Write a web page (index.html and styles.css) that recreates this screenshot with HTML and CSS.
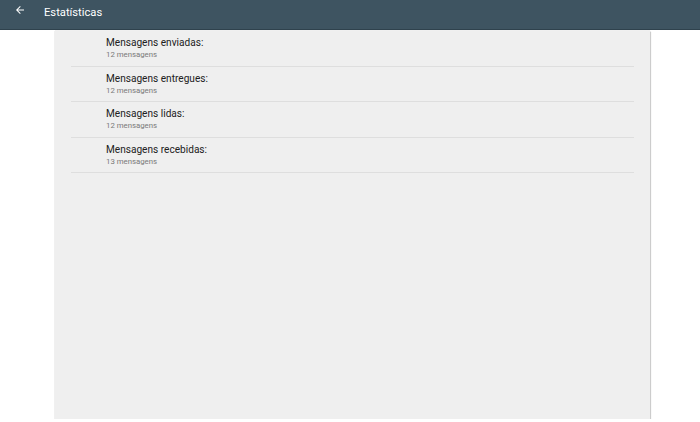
FILE: index.html
```html
<!DOCTYPE html>
<html>
<head>
<meta charset="utf-8">
<link rel="stylesheet" href="styles.css">
</head>
<body>
<header class="appbar">
  <svg class="back" width="12" height="12" viewBox="0 0 24 24"><path d="M20 11H7.83l5.59-5.59L12 4l-8 8 8 8 1.41-1.41L7.83 13H20v-2z" fill="#fff"/></svg>
  <span class="title">Estatísticas</span>
</header>
<main class="wrap">
  <section class="card">
    <div class="row"><div class="name">Mensagens enviadas:</div><div class="val">12 mensagens</div></div>
    <div class="row"><div class="name">Mensagens entregues:</div><div class="val">12 mensagens</div></div>
    <div class="row"><div class="name">Mensagens lidas:</div><div class="val">12 mensagens</div></div>
    <div class="row"><div class="name">Mensagens recebidas:</div><div class="val">13 mensagens</div></div>
  </section>
</main>
</body>
</html>
```
FILE: styles.css
```css
html, body { margin: 0; padding: 0; background: #fff; font-family: Roboto, "Liberation Sans", sans-serif; }
.appbar {
  height: 29px;
  background: #3e5461;
  border-bottom: 1px solid #2f424d;
  display: flex;
  align-items: center;
  box-sizing: content-box;
}
.back { margin-left: 14px; margin-top: -10px; }
.title { color: #fff; font-size: 11.2px; margin-left: 18px; margin-top: -4px; }
.wrap { padding: 1px 48px 0 55px; }
.card {
  width: 595px;
  height: 388px;
  background: #efefef;
  box-shadow: 0 0 1px rgba(0,0,0,0.35), 1px 1px 1px rgba(0,0,0,0.15);
  box-sizing: border-box;
}
.row {
  margin: 0 16px;
  height: 35.5px;
  border-bottom: 1px solid #dedede;
  box-sizing: border-box;
  padding-left: 35px;
  padding-top: 5px;
}
.name { font-size: 10.1px; color: #212121; line-height: 14px; }
.val { font-size: 7.8px; color: #7a7a7a; line-height: 10px; }
```
